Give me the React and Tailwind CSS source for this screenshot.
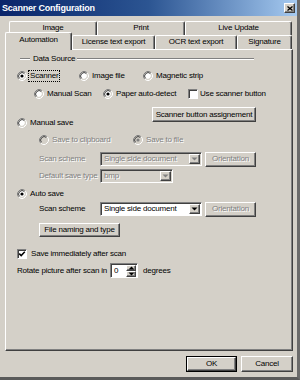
import React from "react";

const raised =
  "bg-[#d4d0c8] border border-t-white border-l-white border-r-[#404040] border-b-[#404040] shadow-[inset_-1px_-1px_0_#808080]";
const sunken =
  "border border-t-[#808080] border-l-[#808080] border-r-white border-b-white shadow-[inset_1px_1px_0_#404040]";
const dis = "text-[#808080] [text-shadow:1px_1px_0_#ffffff]";

function Radio({ checked, disabled }) {
  return (
    <svg width="10" height="10" viewBox="0 0 10 10" className="shrink-0">
      <circle cx="5" cy="5" r="3.5" fill={disabled ? "#d4d0c8" : "#ffffff"} />
      <path d="M1.82 8.18 A4.5 4.5 0 0 1 8.18 1.82" stroke="#808080" fill="none" />
      <path d="M8.18 1.82 A4.5 4.5 0 0 1 1.82 8.18" stroke="#ffffff" fill="none" />
      <path d="M2.53 7.47 A3.5 3.5 0 0 1 7.47 2.53" stroke="#404040" fill="none" />
      <path d="M7.47 2.53 A3.5 3.5 0 0 1 2.53 7.47" stroke="#d4d0c8" fill="none" />
      {checked && <circle cx="5" cy="5" r="1.6" fill={disabled ? "#808080" : "#000000"} />}
    </svg>
  );
}

function Check({ checked }) {
  return (
    <div className={`w-[10px] h-[10px] shrink-0 bg-white ${sunken} flex items-center justify-center`}>
      {checked && (
        <svg width="8" height="8" viewBox="0 0 8 8">
          <path d="M1.2 3.6 L3.2 5.6 L6.8 1.8" stroke="#000" strokeWidth="1.5" fill="none" />
        </svg>
      )}
    </div>
  );
}

function Arrow({ disabled, up }) {
  return (
    <svg width="7" height="4" viewBox="0 0 7 4">
      <path
        d={up ? "M0.5 3.5 L3.5 0.5 L6.5 3.5 Z" : "M0.5 0.5 L6.5 0.5 L3.5 3.5 Z"}
        fill={disabled ? "#808080" : "#000"}
      />
    </svg>
  );
}

function Combo({ className, text, disabled }) {
  return (
    <div
      className={`flex items-center p-[1px] ${sunken} ${disabled ? "bg-[#d4d0c8]" : "bg-white"} ${className}`}
    >
      <span className={`flex-1 pl-[2px] whitespace-nowrap overflow-hidden ${disabled ? dis : ""}`}>{text}</span>
      <div className={`w-[11px] self-stretch flex items-center justify-center ${raised}`}>
        <Arrow disabled={disabled} />
      </div>
    </div>
  );
}

function Btn({ className, children, disabled }) {
  return (
    <div className={`flex items-center justify-center whitespace-nowrap ${raised} ${className}`}>
      <span className={disabled ? dis : ""}>{children}</span>
    </div>
  );
}

function Opt({ className = "", checked, disabled, children, focus }) {
  return (
    <div className={`flex items-center shrink-0 ${className}`}>
      <Radio checked={checked} disabled={disabled} />
      {focus ? (
        <span className="ml-[1px] border border-dotted border-black px-[1px] leading-[10px]">{children}</span>
      ) : (
        <span className={`ml-[3px] whitespace-nowrap ${disabled ? dis : ""}`}>{children}</span>
      )}
    </div>
  );
}

function Tab({ className, children, selected }) {
  return (
    <div
      className={`flex items-center justify-center shrink-0 bg-[#d4d0c8] border-t border-l border-white border-r border-r-[#404040] rounded-t-[2px] shadow-[inset_-1px_0_0_#808080] whitespace-nowrap ${
        selected ? "relative z-10 -mb-[1px] pb-[3px]" : "pb-[1px]"
      } ${className}`}
    >
      {children}
    </div>
  );
}

export default function App() {
  return (
    <div className="w-[300px] h-[380px] bg-[#d4d0c8] font-['Liberation_Sans',Arial,sans-serif] text-[8px] tracking-[-0.2px] text-black flex flex-col border-r-[3px] border-b-[3px] border-r-[#6a6a6a] border-b-[#5a5a5a] overflow-hidden leading-none">
      {/* title bar */}
      <div className="h-[16px] shrink-0 bg-linear-to-r from-[#0a246a] via-[#2c5592] to-[#a6caf0] flex items-center pl-[2px] pr-[2px]">
        <span className="flex-1 font-bold text-white text-[9px] tracking-[-0.2px]">Scanner Configuration</span>
        <div className={`w-[11px] h-[10px] flex items-center justify-center ${raised}`}>
          <svg width="6" height="5" viewBox="0 0 6 5">
            <path d="M0.5 0.5 L5.5 4.5 M5.5 0.5 L0.5 4.5" stroke="#000" strokeWidth="1.3" />
          </svg>
        </div>
      </div>

      {/* tabs */}
      <div className="mt-[5px] h-[14px] pl-[9px] flex">
        <Tab className="w-[88px] h-[14px]">Image</Tab>
        <Tab className="w-[88px] h-[14px]">Print</Tab>
        <Tab className="w-[107px] h-[14px]">Live Update</Tab>
      </div>
      <div className="-mt-[3px] h-[17px] pl-[5px] flex items-end relative">
        <Tab selected className="w-[67px] h-[18px]">Automation</Tab>
        <Tab className="w-[83px] h-[14px]">License text export</Tab>
        <Tab className="w-[82px] h-[14px]">OCR text export</Tab>
        <Tab className="w-[55px] h-[14px]">Signature</Tab>
      </div>

      {/* panel */}
      <div className="ml-[5px] w-[288px] h-[302px] shrink-0 border-t border-l border-white border-r border-b border-r-[#404040] border-b-[#404040] shadow-[inset_-1px_-1px_0_#808080] flex flex-col">
        <div className="mt-[3px] h-[12px] flex items-center">
          <div className="ml-[14px] w-[10px] h-[2px] border-t border-t-[#808080] border-b border-b-white" />
          <span className="ml-[3px]">Data Source</span>
          <div className="ml-[2px] w-[177px] h-[2px] border-t border-t-[#808080] border-b border-b-white" />
        </div>

        <div className="mt-[5px] h-[12px] pl-[11px] flex items-center">
          <Opt className="w-[62px]" checked focus>Scanner</Opt>
          <Opt className="w-[64px]">Image file</Opt>
          <Opt>Magnetic strip</Opt>
        </div>

        <div className="mt-[6px] h-[12px] pl-[28px] flex items-center">
          <Opt className="w-[69px]">Manual Scan</Opt>
          <Opt className="w-[85px]" checked>Paper auto-detect</Opt>
          <div className="flex items-center">
            <Check />
            <span className="ml-[2px] whitespace-nowrap">Use scanner button</span>
          </div>
        </div>

        <div className="mt-[7px] h-[15px] flex">
          <Btn className="ml-[146px] w-[104px] h-[15px]">Scanner button assignement</Btn>
        </div>

        <div className="-mt-[5px] h-[12px] pl-[11px] flex items-center">
          <Opt>Manual save</Opt>
        </div>

        <div className="mt-[5px] h-[12px] pl-[33px] flex items-center">
          <Opt className="w-[94px]" disabled>Save to clipboard</Opt>
          <Opt checked disabled>Save to file</Opt>
        </div>

        <div className="mt-[5px] h-[16px] pl-[33px] flex items-center">
          <span className={`w-[61px] shrink-0 ${dis}`}>Scan scheme</span>
          <Combo className="w-[102px] h-[14px]" text="Single side document" disabled />
          <Btn className="ml-[3px] w-[51px] h-[15px]" disabled>Orientation</Btn>
        </div>

        <div className="mt-[2px] h-[14px] pl-[33px] flex items-center">
          <span className={`w-[61px] shrink-0 ${dis}`}>Default save type</span>
          <Combo className="w-[73px] h-[14px]" text="bmp" disabled />
        </div>

        <div className="mt-[5px] h-[12px] pl-[11px] flex items-center">
          <Opt checked>Auto save</Opt>
        </div>

        <div className="mt-[1px] h-[16px] pl-[33px] flex items-center">
          <span className="w-[61px] shrink-0">Scan scheme</span>
          <Combo className="w-[102px] h-[14px]" text="Single side document" />
          <Btn className="ml-[3px] w-[51px] h-[15px]" disabled>Orientation</Btn>
        </div>

        <div className="mt-[6px] h-[14px] flex">
          <Btn className="ml-[33px] w-[81px] h-[14px]">File naming and type</Btn>
        </div>

        <div className="mt-[11px] h-[12px] pl-[11px] flex items-center">
          <Check checked />
          <span className="ml-[4px]">Save immediately after scan</span>
        </div>

        <div className="mt-[3px] h-[15px] pl-[11px] flex items-center">
          <span className="w-[93px] shrink-0 whitespace-nowrap">Rotate picture after scan in</span>
          <div className={`w-[28px] h-[15px] bg-white flex items-stretch p-[1px] ${sunken}`}>
            <span className="flex-1 pl-[2px] flex items-center">0</span>
            <div className="w-[10px] flex flex-col">
              <div className={`flex-1 flex items-center justify-center ${raised}`}>
                <Arrow up />
              </div>
              <div className={`flex-1 flex items-center justify-center ${raised}`}>
                <Arrow />
              </div>
            </div>
          </div>
          <span className="ml-[5px]">degrees</span>
        </div>
      </div>

      {/* buttons */}
      <div className="mt-[5px] flex justify-end pr-[4px] gap-[4px]">
        <div className="w-[51px] h-[16px] border border-black flex">
          <Btn className="flex-1">OK</Btn>
        </div>
        <Btn className="w-[52px] h-[16px]">Cancel</Btn>
      </div>
    </div>
  );
}
